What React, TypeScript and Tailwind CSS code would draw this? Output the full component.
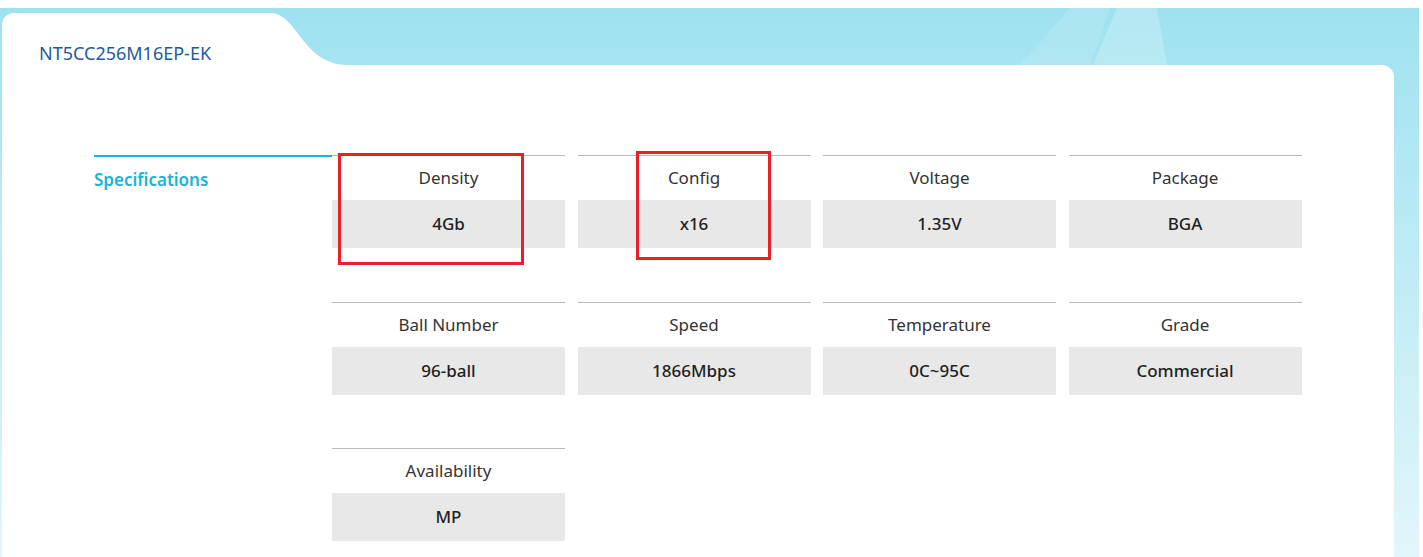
import React from 'react';

const specs = [
  { label: 'Density', value: '4Gb' },
  { label: 'Config', value: 'x16' },
  { label: 'Voltage', value: '1.35V' },
  { label: 'Package', value: 'BGA' },
  { label: 'Ball Number', value: '96-ball' },
  { label: 'Speed', value: '1866Mbps' },
  { label: 'Temperature', value: '0C~95C' },
  { label: 'Grade', value: 'Commercial' },
  { label: 'Availability', value: 'MP' },
];

function SpecCell({ label, value }: { label: string; value: string }) {
  return (
    <div className="border-t border-[#b8b8b8]">
      <div className="h-[44px] flex items-center justify-center text-[17px] text-[#333]">{label}</div>
      <div className="h-[48px] bg-[#e8e8e8] flex items-center justify-center text-[17px] font-medium text-[#1f1f1f]">
        {value}
      </div>
    </div>
  );
}

export default function App() {
  return (
    <div className="w-[1423px] h-[557px] bg-white pt-2 overflow-hidden" style={{ fontFamily: '"Noto Sans", "Open Sans", sans-serif' }}>
      <div className="relative h-full mr-[4px] pl-[2px] pr-[25px] pt-[5px] flex flex-col bg-gradient-to-b from-[#9ee2ef] to-[#e2f6fb]">
        {/* light streaks in the banner */}
        <svg className="absolute left-0 top-0" width="1419" height="60">
          <polygon points="1070,0 1110,0 1090,57 1020,57" fill="#ffffff" opacity="0.12" />
          <polygon points="1117,0 1157,0 1167,57 1093,57" fill="#ffffff" opacity="0.22" />
        </svg>

        <div className="relative flex h-[52px] shrink-0">
          <div className="w-[268px] bg-white rounded-tl-[12px] pl-[37px] pt-[31px] text-[18px] text-[#1e5aa0] leading-none">
            NT5CC256M16EP-EK
          </div>
          <svg width="78" height="52" viewBox="0 0 78 52" className="block">
            <path d="M0 0 C28 0 32 52 78 52 L0 52 Z" fill="#ffffff" />
          </svg>
        </div>

        <div className="relative flex-1 bg-white rounded-tr-[12px] pl-[92px] pt-[90px] flex">
          <div className="w-[238px] border-t-2 border-[#1ab4d8] pt-[10px] text-[17px] font-semibold text-[#1ab4d8] self-start">
            Specifications
          </div>
          <div className="grid grid-cols-[233px_233px_233px_233px] gap-x-[12.5px] gap-y-[53.5px] self-start">
            {specs.map((s) => (
              <SpecCell key={s.label} label={s.label} value={s.value} />
            ))}
          </div>

          <div className="absolute left-[336px] top-[88px] w-[186px] h-[112px] border-[3px] border-[#e52228]" />
          <div className="absolute left-[634px] top-[86px] w-[135px] h-[109px] border-[3px] border-[#e52228]" />
        </div>
      </div>
    </div>
  );
}
